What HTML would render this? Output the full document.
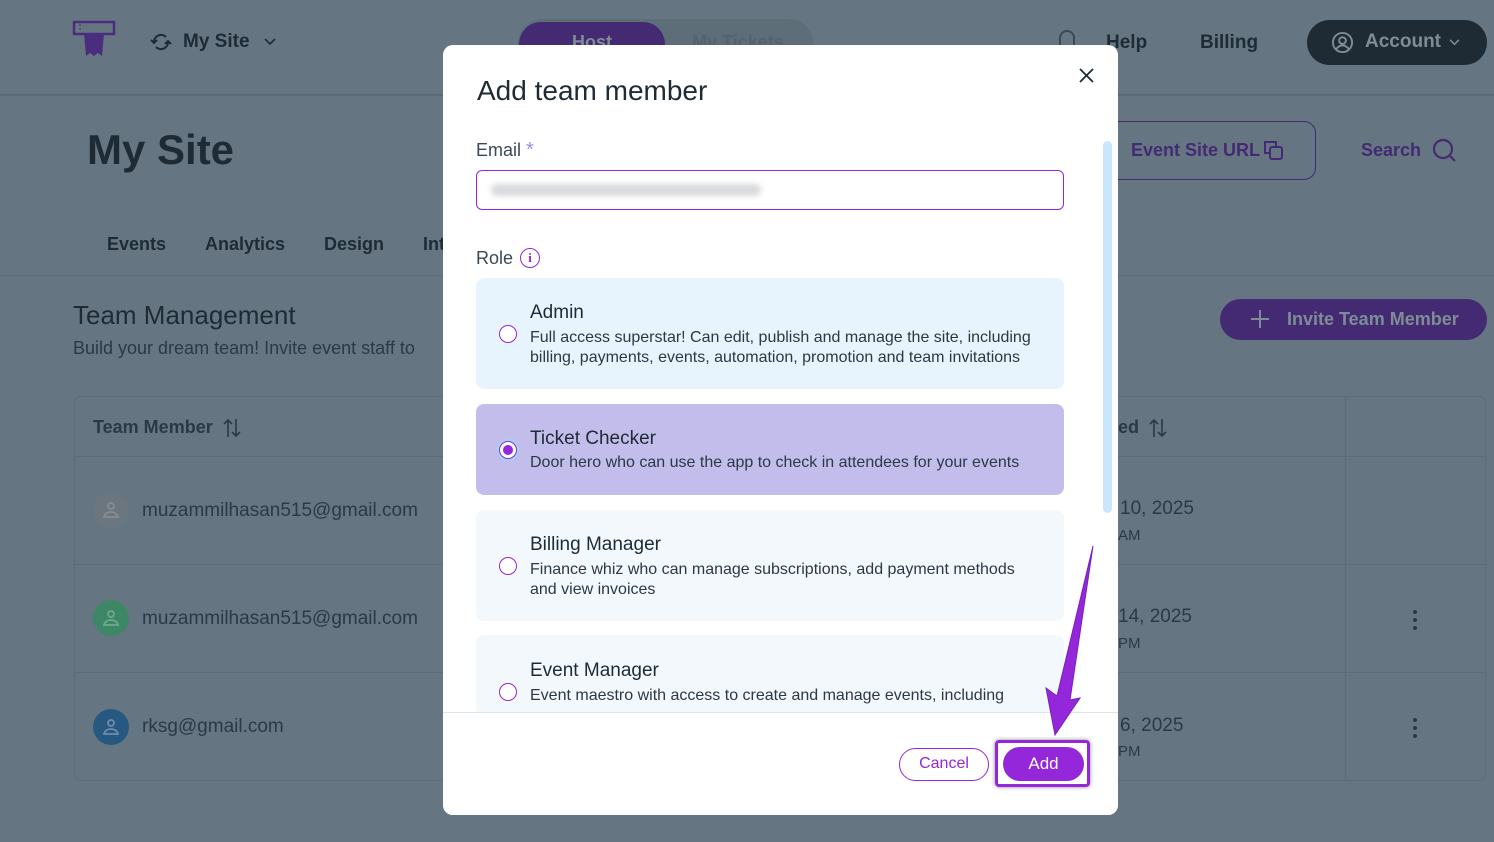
<!DOCTYPE html>
<html><head><meta charset="utf-8"><style>
*{margin:0;padding:0;box-sizing:border-box}
body{width:1494px;height:842px;overflow:hidden;background:#657682;font-family:"Liberation Sans",sans-serif;position:relative;color:#1e2b35}
.a{position:absolute;white-space:nowrap}
.b{font-weight:bold}
.av svg{position:absolute;left:9px;top:9px}
</style></head><body>
<!-- header -->
<div class="a" style="left:0;top:94px;width:1494px;height:2px;background:#5b6b76"></div>
<svg class="a" style="left:72px;top:20px" width="46" height="40" viewBox="0 0 46 40"><rect x="2" y="2" width="40" height="12" fill="none" stroke="#4b2d7e" stroke-width="2.5"/><line x1="8" y1="4" x2="8" y2="12" stroke="#4b2d7e" stroke-dasharray="2 2"/><path d="M12 14 H32 L30 36 L26 33 L22 36 L18 33 L14 36 Z" fill="#4b2d7e"/></svg>
<svg class="a" style="left:150px;top:33px" width="22" height="18" viewBox="0 0 22 18" fill="none" stroke="#1e2b35" stroke-width="2"><path d="M4 9a7 7 0 0 1 12-5"/><path d="M18 9a7 7 0 0 1-12 5"/><path d="M1 7l3 3 3-3"/><path d="M15 11l3-3 3 3"/></svg>
<div class="a b" style="left:183px;top:31px;font-size:19px">My Site</div>
<svg class="a" style="left:264px;top:38px" width="12" height="8" viewBox="0 0 12 8" fill="none" stroke="#1e2b35" stroke-width="1.6"><path d="M1 1l5 5 5-5"/></svg>
<div class="a" style="left:518px;top:19px;width:295px;height:48px;border-radius:24px;background:#5e6e79"></div>
<div class="a" style="left:519px;top:22px;width:146px;height:44px;border-radius:22px;background:#442a73"></div>
<div class="a b" style="left:572px;top:32px;font-size:18px;color:#7e8c96">Host</div>
<div class="a b" style="left:692px;top:32px;font-size:18px;color:#53626d">My Tickets</div>
<div class="a" style="left:1059px;top:30px;width:16px;height:20px;border:2px solid #3a4954;border-radius:8px 8px 0 0"></div>
<div class="a b" style="left:1106px;top:32px;font-size:19px">Help</div>
<div class="a b" style="left:1200px;top:32px;font-size:19px">Billing</div>
<div class="a" style="left:1307px;top:20px;width:180px;height:45px;border-radius:23px;background:#1e2b35"></div>
<svg class="a" style="left:1331px;top:31px" width="23" height="23" viewBox="0 0 24 24" fill="none" stroke="#7e8c96" stroke-width="2"><circle cx="12" cy="12" r="10"/><circle cx="12" cy="10" r="3.5"/><path d="M5.5 19c2-3 4-4 6.5-4s4.5 1 6.5 4"/></svg>
<div class="a b" style="left:1365px;top:31px;font-size:19px;color:#7e8c96">Account</div>
<svg class="a" style="left:1449px;top:39px" width="11" height="7" viewBox="0 0 12 8" fill="none" stroke="#7e8c96" stroke-width="1.8"><path d="M1 1l5 5 5-5"/></svg>
<div class="a b" style="left:87px;top:126px;font-size:42px">My Site</div>
<div class="a b" style="left:107px;top:234px;font-size:18px">Events</div>
<div class="a b" style="left:205px;top:234px;font-size:18px">Analytics</div>
<div class="a b" style="left:324px;top:234px;font-size:18px">Design</div>
<div class="a b" style="left:423px;top:234px;font-size:18px">Int</div>
<div class="a" style="left:0;top:275px;width:1494px;height:1px;background:#5b6b76"></div>
<div class="a" style="left:1090px;top:121px;width:226px;height:59px;border:1.5px solid #442a73;border-radius:12px"></div>
<div class="a b" style="left:1131px;top:140px;font-size:18px;color:#442a73">Event Site URL</div>
<svg class="a" style="left:1262px;top:139px" width="22" height="22" viewBox="0 0 22 22" fill="none" stroke="#442a73" stroke-width="2"><path d="M8 14H3V3h11v5"/><rect x="8" y="8" width="12" height="12" rx="2"/></svg>
<div class="a b" style="left:1361px;top:140px;font-size:18px;color:#442a73">Search</div>
<svg class="a" style="left:1432px;top:138px" width="26" height="26" viewBox="0 0 26 26" fill="none" stroke="#442a73" stroke-width="2.2"><circle cx="11" cy="11" r="9"/><path d="M18 18l5 5"/></svg>
<div class="a" style="left:73px;top:300px;font-size:26px">Team Management</div>
<div class="a" style="left:73px;top:338px;font-size:18px;color:#2b3944">Build your dream team! Invite event staff to</div>
<div class="a" style="left:1220px;top:299px;width:267px;height:41px;border-radius:21px;background:#442a73"></div>
<svg class="a" style="left:1250px;top:309px" width="20" height="20" viewBox="0 0 20 20" stroke="#7e8c96" stroke-width="2"><path d="M10 1v18M1 10h18"/></svg>
<div class="a b" style="left:1287px;top:309px;font-size:18px;color:#7e8c96">Invite Team Member</div>
<!-- table -->
<div class="a" style="left:74px;top:396px;width:1412px;height:385px;border:1px solid #5d6d78;border-radius:6px"></div>
<div class="a" style="left:74px;top:456px;width:1412px;height:1px;background:#5d6d78"></div>
<div class="a" style="left:74px;top:564px;width:1412px;height:1px;background:#5d6d78"></div>
<div class="a" style="left:74px;top:672px;width:1412px;height:1px;background:#5d6d78"></div>
<div class="a" style="left:1345px;top:397px;width:1px;height:383px;background:#5d6d78"></div>
<div class="a b" style="left:93px;top:417px;font-size:18px;color:#2b3944">Team Member</div>
<svg class="a" style="left:223px;top:418px" width="18" height="20" viewBox="0 0 18 20" fill="none" stroke="#2b3944" stroke-width="1.6"><path d="M5 19V2M1 6l4-4 4 4M13 1v17M9 14l4 4 4-4"/></svg>
<div class="a b" style="left:1118px;top:417px;font-size:18px;color:#2b3944">ed</div>
<svg class="a" style="left:1149px;top:418px" width="18" height="20" viewBox="0 0 18 20" fill="none" stroke="#2b3944" stroke-width="1.6"><path d="M5 19V2M1 6l4-4 4 4M13 1v17M9 14l4 4 4-4"/></svg>
<div class="a av" style="left:93px;top:492px;width:36px;height:36px;border-radius:50%;background:#6c767e"><svg width="18" height="18" viewBox="0 0 18 18" fill="none" stroke="#858e95" stroke-width="1.8"><circle cx="9" cy="5" r="3"/><path d="M2 16c1-3.5 4-5 7-5s6 1.5 7 5z"/></svg></div>
<div class="a av" style="left:93px;top:600px;width:36px;height:36px;border-radius:50%;background:#3d8766"><svg width="18" height="18" viewBox="0 0 18 18" fill="none" stroke="#6ea98c" stroke-width="1.8"><circle cx="9" cy="5" r="3"/><path d="M2 16c1-3.5 4-5 7-5s6 1.5 7 5z"/></svg></div>
<div class="a av" style="left:93px;top:709px;width:36px;height:36px;border-radius:50%;background:#275882"><svg width="18" height="18" viewBox="0 0 18 18" fill="none" stroke="#6d8eab" stroke-width="1.8"><circle cx="9" cy="5" r="3"/><path d="M2 16c1-3.5 4-5 7-5s6 1.5 7 5z"/></svg></div>
<div class="a" style="left:142px;top:500px;font-size:19px;color:#2b3944">muzammilhasan515@gmail.com</div>
<div class="a" style="left:142px;top:608px;font-size:19px;color:#2b3944">muzammilhasan515@gmail.com</div>
<div class="a" style="left:142px;top:716px;font-size:19px;color:#2b3944">rksg@gmail.com</div>
<div class="a" style="left:1120px;top:498px;font-size:19px;color:#2b3944">10, 2025</div>
<div class="a" style="left:1118px;top:527px;font-size:15px;color:#2b3944">AM</div>
<div class="a" style="left:1118px;top:606px;font-size:19px;color:#2b3944">14, 2025</div>
<div class="a" style="left:1118px;top:635px;font-size:15px;color:#2b3944">PM</div>
<div class="a" style="left:1120px;top:715px;font-size:19px;color:#2b3944">6, 2025</div>
<div class="a" style="left:1118px;top:743px;font-size:15px;color:#2b3944">PM</div>
<svg class="a" style="left:1411px;top:609px" width="8" height="22" viewBox="0 0 8 22" fill="#2b3944"><circle cx="4" cy="3" r="2"/><circle cx="4" cy="11" r="2"/><circle cx="4" cy="19" r="2"/></svg>
<svg class="a" style="left:1411px;top:717px" width="8" height="22" viewBox="0 0 8 22" fill="#2b3944"><circle cx="4" cy="3" r="2"/><circle cx="4" cy="11" r="2"/><circle cx="4" cy="19" r="2"/></svg>
<!-- modal -->
<div class="a" style="left:443px;top:45px;width:675px;height:770px;background:#fff;border-radius:10px;overflow:hidden">
<div class="a" style="left:34px;top:30px;font-size:28px">Add team member</div>
<svg class="a" style="left:636px;top:23px" width="15" height="15" viewBox="0 0 15 15" stroke="#1e2b35" stroke-width="1.8"><path d="M1 1l13 13M14 1L1 14"/></svg>
<div class="a" style="left:660px;top:96px;width:9px;height:372px;border-radius:5px;background:#c9e7fc"></div>
<div class="a" style="left:33px;top:94px;font-size:18px;color:#3a4954">Email <span style="color:#9a8ee0;font-size:20px">*</span></div>
<div class="a" style="left:33px;top:125px;width:588px;height:40px;border:1.5px solid #9327d9;border-radius:6px"></div>
<div class="a" style="left:48px;top:139px;width:270px;height:12px;background:#d7d9dc;border-radius:6px;filter:blur(3px)"></div>
<div class="a" style="left:33px;top:203px;font-size:18px;color:#3a4954">Role</div>
<div class="a" style="left:77px;top:203px;width:20px;height:20px;border:1.5px solid #9327d9;border-radius:50%;color:#9327d9;font:bold 13px 'Liberation Serif',serif;text-align:center;line-height:17px">i</div>
<div class="a" style="left:33px;top:233px;width:588px;height:111px;background:#e8f4fd;border-radius:8px"></div>
<div class="a" style="left:33px;top:359px;width:588px;height:91px;background:#c3bdeb;border-radius:8px"></div>
<div class="a" style="left:33px;top:465px;width:588px;height:111px;background:#f3f8fd;border-radius:8px"></div>
<div class="a" style="left:33px;top:590px;width:588px;height:90px;background:#f3f8fd;border-radius:8px"></div>
<div class="a" style="left:56px;top:280px;width:18px;height:18px;border:1.5px solid #9327d9;border-radius:50%;background:#fff"></div>
<div class="a" style="left:54px;top:394px;width:22px;height:22px;border-radius:50%;background:#9fd3f8"></div>
<div class="a" style="left:56px;top:396px;width:18px;height:18px;border:1.5px solid #9327d9;border-radius:50%;background:#fff"></div>
<div class="a" style="left:60px;top:400px;width:10px;height:10px;border-radius:50%;background:#9327d9"></div>
<div class="a" style="left:56px;top:512px;width:18px;height:18px;border:1.5px solid #9327d9;border-radius:50%;background:#fff"></div>
<div class="a" style="left:56px;top:638px;width:18px;height:18px;border:1.5px solid #9327d9;border-radius:50%;background:#fff"></div>
<div class="a" style="left:87px;top:257px;font-size:19px">Admin</div>
<div class="a" style="left:87px;top:283px;font-size:16px;line-height:20px;color:#2b3944">Full access superstar! Can edit, publish and manage the site, including<br>billing, payments, events, automation, promotion and team invitations</div>
<div class="a" style="left:87px;top:383px;font-size:19px">Ticket Checker</div>
<div class="a" style="left:87px;top:409px;font-size:16px;color:#2b3944">Door hero who can use the app to check in attendees for your events</div>
<div class="a" style="left:87px;top:489px;font-size:19px">Billing Manager</div>
<div class="a" style="left:87px;top:515px;font-size:16px;line-height:20px;color:#2b3944">Finance whiz who can manage subscriptions, add payment methods<br>and view invoices</div>
<div class="a" style="left:87px;top:615px;font-size:19px">Event Manager</div>
<div class="a" style="left:87px;top:641px;font-size:16px;line-height:20px;color:#2b3944">Event maestro with access to create and manage events, including</div>
<div class="a" style="left:0;top:667px;width:675px;height:103px;background:#fff;border-top:1px solid #dde3e8"></div>
<div class="a" style="left:456px;top:703px;width:90px;height:33px;border:1.5px solid #9327d9;border-radius:17px;color:#9327d9;font-size:16px;text-align:center;line-height:30px">Cancel</div>
<div class="a" style="left:552px;top:695px;width:95px;height:47px;border:3px solid #9327d9;border-radius:4px;box-shadow:0 0 4px #888"></div>
<div class="a" style="left:560px;top:702px;width:81px;height:34px;border-radius:17px;background:#9327d9;color:#fff;font-size:17px;text-align:center;line-height:34px">Add</div>
</div>
<svg class="a" style="left:1040px;top:540px" width="60" height="200" viewBox="0 0 60 200"><path d="M53 6 L30 160 L40 158 L15 195 L6 148 L17 156 Z" fill="#9327d9" stroke="#7a1fc0" stroke-width="1"/></svg>
</body></html>
